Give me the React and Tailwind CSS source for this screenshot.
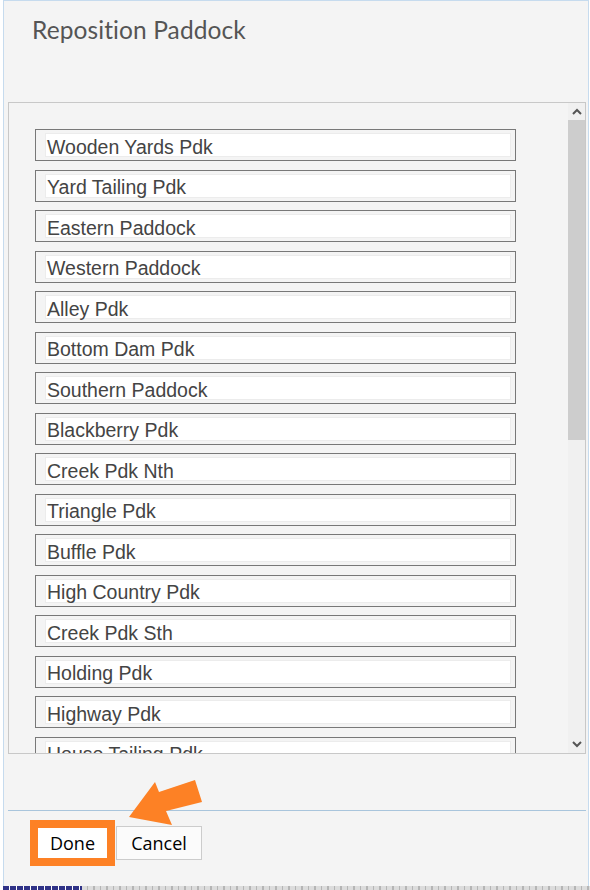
import React from "react";

const paddocks = [
  "Wooden Yards Pdk",
  "Yard Tailing Pdk",
  "Eastern Paddock",
  "Western Paddock",
  "Alley Pdk",
  "Bottom Dam Pdk",
  "Southern Paddock",
  "Blackberry Pdk",
  "Creek Pdk Nth",
  "Triangle Pdk",
  "Buffle Pdk",
  "High Country Pdk",
  "Creek Pdk Sth",
  "Holding Pdk",
  "Highway Pdk",
  "House Tailing Pdk",
];

const PaddockRow = ({ name }) => (
  <div className="w-[481px] h-[32px] shrink-0 border border-[#787878] bg-[#f4f4f4] pl-[9px] pr-[4px] py-[3px]">
    <div className="h-full bg-white border border-[#ececec] flex items-center pl-[1px] pt-[5px] text-[19.5px] leading-none text-[#444] font-['Liberation_Sans',Arial,sans-serif]">
      {name}
    </div>
  </div>
);

const Scrollbar = () => (
  <div className="w-[17px] h-full flex flex-col bg-[#f0f0f0]">
    <div className="h-[17px] flex items-center justify-center bg-[#f0f0f0]">
      <svg width="10" height="7" viewBox="0 0 10 7">
        <path d="M1 6 L5 2 L9 6" stroke="#555" strokeWidth="2" fill="none" />
      </svg>
    </div>
    <div className="h-[320px] bg-[#cdcdcd]" />
    <div className="flex-1" />
    <div className="h-[17px] flex items-center justify-center">
      <svg width="10" height="7" viewBox="0 0 10 7">
        <path d="M1 1 L5 5 L9 1" stroke="#555" strokeWidth="2" fill="none" />
      </svg>
    </div>
  </div>
);

export default function App() {
  return (
    <div className="w-[590px] h-[890px] bg-white relative overflow-hidden">
      <div className="ml-[3px] w-[586px] h-[886px] border-t border-l border-r border-[#c6dbee] bg-[#f4f4f4] flex flex-col">
        <h1 className="pl-[28px] pt-[15px] h-[101px] text-[24.5px] leading-[28px] text-[#555] font-['Lato',sans-serif] font-normal tracking-[0.1px]">
          Reposition Paddock
        </h1>

        {/* list box */}
        <div className="ml-[4px] w-[578px] h-[652px] border border-[#c8c8c8] flex">
          <div className="flex-1 overflow-hidden pl-[26px] pt-[26px] flex flex-col gap-[8.5px]">
            {paddocks.map((p) => (
              <PaddockRow key={p} name={p} />
            ))}
          </div>
          <Scrollbar />
        </div>

        {/* footer */}
        <div className="ml-[4px] w-[578px] mt-[56px] border-t border-[#a9c5dc] pl-[22px] pt-[9px] flex items-center">
          <div className="w-[85px] h-[46px] border-[8px] border-[#fd8125] bg-white flex items-center justify-center text-[18px] text-black font-['Open_Sans',sans-serif]">
            Done
          </div>
          <button className="ml-[1px] w-[86px] h-[34px] border border-[#cccccc] bg-[#fbfbfb] text-[18px] text-black font-['Open_Sans',sans-serif]">
            Cancel
          </button>
        </div>
      </div>

      {/* bottom strip */}
      <div className="flex h-[4px] ml-[3px]">
        <div className="w-[79px] h-full bg-[repeating-linear-gradient(90deg,#2f3287_0px,#2f3287_6px,#ffffff_6px,#ffffff_7px)]" />
        <div className="flex-1 h-full bg-[repeating-linear-gradient(90deg,#dcdcdc_0px,#dcdcdc_5px,#b5b5b5_5px,#b5b5b5_6.5px)]" />
      </div>

      {/* annotation arrow */}
      <svg className="absolute left-0 top-0 pointer-events-none" width="590" height="890">
        <polygon
          points="129,817 155,782 159,792 195,780 202,802 166,811 172,825"
          fill="#fd8125"
        />
      </svg>
    </div>
  );
}
